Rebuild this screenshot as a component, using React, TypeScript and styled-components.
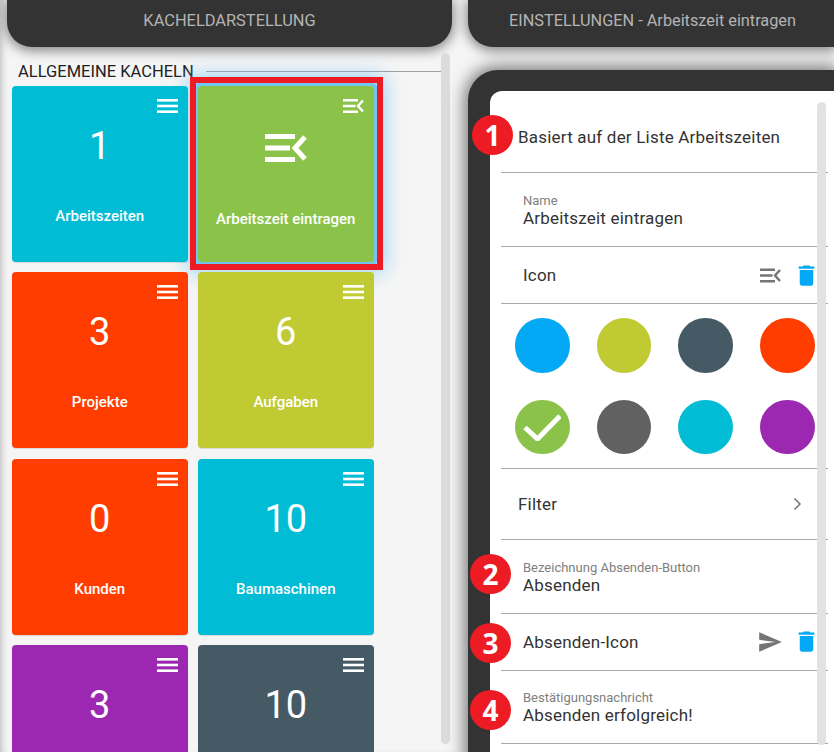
import React from "react";
import styled, { createGlobalStyle } from "styled-components";

const GlobalStyle = createGlobalStyle`
  html, body {
    margin: 0;
    padding: 0;
    background: #f5f5f5;
    font-family: Roboto, "Liberation Sans", sans-serif;
  }
`;

const Page = styled.div`
  display: flex;
  width: 834px;
  height: 752px;
  overflow: hidden;
  background: #f5f5f5;
`;

const LeftPane = styled.div`
  position: relative;
  display: flex;
  flex-direction: column;
  flex: 0 0 460px;
  height: 752px;
  box-sizing: border-box;
  padding: 0 8px 0 0;
  box-shadow: inset 6px 0 6px -4px rgba(0, 0, 0, 0.22);
`;

const RightPane = styled.div`
  position: relative;
  display: flex;
  flex-direction: column;
  flex: 1;
  min-width: 0;
  padding-left: 8px;
  box-sizing: border-box;
`;

const Header = styled.div`
  display: flex;
  align-items: center;
  flex: 0 0 47px;
  box-sizing: border-box;
  padding-bottom: 6px;
  background: #333333;
  box-shadow: 0 2px 12px 2px rgba(0, 0, 0, 0.45);
  color: #b4b4b4;
  white-space: nowrap;
`;

const LeftHeader = styled(Header)`
  justify-content: center;
  margin-left: 7px;
  border-radius: 0 0 25px 25px;
  font-size: 16.4px;
`;

const RightHeader = styled(Header)`
  padding-left: 41px;
  border-radius: 0 0 0 25px;
  font-size: 16.3px;
`;

const SectionRow = styled.div`
  display: flex;
  flex: 0 0 24px;
  align-items: center;
  margin: 12px 9px 3px 18px;
`;

const SectionTitle = styled.div`
  color: #222222;
  font-size: 16.5px;
  white-space: nowrap;
`;

const SectionRule = styled.div`
  flex: 1;
  height: 1px;
  margin-left: 12px;
  background: #9e9e9e;
`;

const TileGrid = styled.div`
  display: grid;
  grid-template-columns: 175.5px 175.5px;
  grid-auto-rows: 176px;
  gap: 10.4px 10.5px;
  padding-left: 12px;
`;

const Tile = styled.div<{ $color: string; $selected?: boolean }>`
  position: relative;
  z-index: ${(p) => (p.$selected ? 0 : 1)};
  display: flex;
  flex-direction: column;
  align-items: center;
  background: ${(p) => p.$color};
  border-radius: 4px;
  color: #ffffff;
  box-shadow: ${(p) =>
    p.$selected
      ? "0 0 0 4px #72c6f0, 0 0 18px 12px rgba(110, 195, 245, 0.6)"
      : "0 1px 1px rgba(0, 0, 0, 0.12)"};
`;

const TileMenu = styled.svg`
  position: absolute;
  top: 13px;
  right: 9.5px;
  width: 21px;
  height: 14px;
`;

const TileNumber = styled.div`
  margin-top: 38px;
  height: 45px;
  font-size: 38px;
  line-height: 45px;
`;

const TileIcon = styled.svg`
  margin-top: 48px;
  width: 42px;
  height: 28px;
`;

const TileLabel = styled.div<{ $selected?: boolean }>`
  margin-top: ${(p) => (p.$selected ? 48 : 38)}px;
  font-size: 15px;
  font-weight: 500;
  line-height: 18px;
  white-space: nowrap;
`;

const Highlight = styled.div`
  position: absolute;
  z-index: 2;
  left: 190px;
  top: 77px;
  width: 193px;
  height: 193px;
  box-sizing: border-box;
  border: 6px solid #ed1c24;
`;

const ScrollTrack = styled.div<{ $color: string }>`
  position: absolute;
  width: 9px;
  border-radius: 5px;
  background: ${(p) => p.$color};
`;

const LeftScroll = styled(ScrollTrack)`
  left: 441px;
  top: 53px;
  height: 691px;
`;

const InnerScroll = styled(ScrollTrack)`
  right: 8px;
  top: 11px;
  bottom: 7px;
`;

const Phone = styled.div`
  position: relative;
  flex: 0 0 auto;
  margin-top: 23px;
  height: 720px;
  padding: 21px 0 0 22px;
  box-sizing: border-box;
  background: #333333;
  border-radius: 30px 0 0 0;
  box-shadow: 0 0 16px 4px rgba(0, 0, 0, 0.5);
`;

const Screen = styled.div`
  position: relative;
  height: 661px;
  padding-left: 11px;
  padding-right: 6px;
  box-sizing: border-box;
  background: #ffffff;
  border-radius: 12px 0 0 0;
`;

const Row = styled.div<{ $height: number; $inset: number }>`
  display: flex;
  align-items: center;
  height: ${(p) => p.$height}px;
  padding-left: ${(p) => p.$inset}px;
  border-bottom: 1px solid #a8a8a8;
  color: #333333;
  font-size: 17px;
  letter-spacing: 0.2px;
  white-space: nowrap;
`;

const SourceRow = styled(Row)`
  box-sizing: border-box;
  padding-top: 10px;
  height: 82px;
`;

const FieldRow = styled(Row)`
  flex-direction: column;
  align-items: flex-start;
  justify-content: center;
  box-sizing: border-box;
  padding-top: 5px;
`;

const FieldLabel = styled.div`
  color: #808080;
  font-size: 13px;
  line-height: 12px;
  letter-spacing: 0;
`;

const FieldValue = styled.div`
  margin-top: 1px;
  color: #333333;
  font-size: 17px;
  line-height: 21px;
`;

const RowEnd = styled.div`
  display: flex;
  align-items: center;
  margin-left: auto;
`;

const ChevronSlot = styled(RowEnd)`
  padding-right: 26px;
`;

const IconActions = styled(RowEnd)`
  gap: 16.5px;
  padding-right: 13.5px;
`;

const SendGlyph = styled.svg`
  margin: 0 -2px;
`;

const TrashGlyph = styled.svg`
  margin: 0 -5px;
`;

const ColorGrid = styled.div`
  display: grid;
  grid-template-columns: repeat(4, 54.5px);
  grid-auto-rows: 54.5px;
  gap: 27.2px;
  padding: 14px 0 13.8px 14px;
  border-bottom: 1px solid #a8a8a8;
`;

const Swatch = styled.div<{ $color: string }>`
  display: flex;
  align-items: center;
  justify-content: center;
  border-radius: 50%;
  background: ${(p) => p.$color};
`;

const Badge = styled.div<{ $top: number; $left: number }>`
  position: absolute;
  left: ${(p) => p.$left}px;
  top: ${(p) => p.$top}px;
  display: flex;
  align-items: center;
  justify-content: center;
  width: 41px;
  height: 40px;
  border-radius: 50%;
  background: #ed1c24;
  color: #ffffff;
  font-family: "Open Sans", sans-serif;
  font-size: 28px;
  font-weight: 700;
  line-height: 40px;
`;

const MenuIcon = () => (
  <TileMenu viewBox="0 0 21 14">
    <rect width="21" height="2.6" fill="#fff" />
    <rect y="5.7" width="21" height="2.6" fill="#fff" />
    <rect y="11.4" width="21" height="2.6" fill="#fff" />
  </TileMenu>
);

// list icon with the chevron, used on the tile and in the settings row
const FormGlyph = ({ color }: { color: string }) => (
  <>
    <rect width="30" height="5" fill={color} />
    <rect y="11.5" width="25" height="5" fill={color} />
    <rect y="23" width="30" height="5" fill={color} />
    <polyline points="40,3 30,14 40,25" fill="none" stroke={color} strokeWidth="5" />
  </>
);

const tiles = [
  { color: "#00bcd4", value: "1", label: "Arbeitszeiten" },
  { color: "#8bc34a", label: "Arbeitszeit eintragen", selected: true },
  { color: "#ff3d00", value: "3", label: "Projekte" },
  { color: "#c0ca33", value: "6", label: "Aufgaben" },
  { color: "#ff3d00", value: "0", label: "Kunden" },
  { color: "#00bcd4", value: "10", label: "Baumaschinen" },
  { color: "#9c27b0", value: "3", label: "" },
  { color: "#455a64", value: "10", label: "" },
];

const swatches = ["#03a9f4", "#c0ca33", "#455a64", "#ff3d00", "#8bc34a", "#616161", "#00bcd4", "#9c27b0"];

const TrashIcon = () => (
  <TrashGlyph width="27" height="27" viewBox="0 0 24 24">
    <path fill="#03a9f4" d="M6 19c0 1.1.9 2 2 2h8c1.1 0 2-.9 2-2V7H6v12zM19 4h-3.5l-1-1h-5l-1 1H5v2h14V4z" />
  </TrashGlyph>
);

const App = () => (
  <Page>
    <GlobalStyle />
    <LeftPane>
      <LeftHeader>KACHELDARSTELLUNG</LeftHeader>
      <SectionRow>
        <SectionTitle>ALLGEMEINE KACHELN</SectionTitle>
        <SectionRule />
      </SectionRow>
      <TileGrid>
        {tiles.map((t, i) => (
          <Tile key={i} $color={t.color} $selected={t.selected}>
            {t.selected ? (
              <TileMenu viewBox="0 0 42 28">
                <FormGlyph color="#fff" />
              </TileMenu>
            ) : (
              <MenuIcon />
            )}
            {t.selected ? (
              <TileIcon viewBox="0 0 42 28">
                <FormGlyph color="#fff" />
              </TileIcon>
            ) : (
              <TileNumber>{t.value}</TileNumber>
            )}
            <TileLabel $selected={t.selected}>{t.label}</TileLabel>
          </Tile>
        ))}
      </TileGrid>
      <Highlight />
      <LeftScroll $color="#dcdcdc" />
    </LeftPane>
    <RightPane>
      <RightHeader>EINSTELLUNGEN - Arbeitszeit eintragen</RightHeader>
      <Phone>
        <Screen>
          <SourceRow $height={82} $inset={17}>Basiert auf der Liste Arbeitszeiten</SourceRow>
          <FieldRow $height={74} $inset={22}>
            <FieldLabel>Name</FieldLabel>
            <FieldValue>Arbeitszeit eintragen</FieldValue>
          </FieldRow>
          <Row $height={56} $inset={22}>
            Icon
            <IconActions>
              <svg width="21" height="15" viewBox="0 0 42 28">
                <FormGlyph color="#757575" />
              </svg>
              <TrashIcon />
            </IconActions>
          </Row>
          <ColorGrid>
            {swatches.map((c, i) => (
              <Swatch key={c + i} $color={c}>
                {i === 4 && (
                  <svg width="38" height="28" viewBox="0 0 38 28">
                    <polyline points="2,14.5 14.5,26 37,3" fill="none" stroke="#fff" strokeWidth="5" />
                  </svg>
                )}
              </Swatch>
            ))}
          </ColorGrid>
          <Row $height={70} $inset={17}>
            Filter
            <ChevronSlot>
              <svg width="9" height="14" viewBox="0 0 9 14">
                <polyline points="1.5,1.5 7,7 1.5,12.5" fill="none" stroke="#757575" strokeWidth="1.5" />
              </svg>
            </ChevronSlot>
          </Row>
          <FieldRow $height={74} $inset={22}>
            <FieldLabel>Bezeichnung Absenden-Button</FieldLabel>
            <FieldValue>Absenden</FieldValue>
          </FieldRow>
          <Row $height={56} $inset={22}>
            Absenden-Icon
            <IconActions>
              <SendGlyph width="26" height="26" viewBox="0 0 24 24">
                <path fill="#757575" d="M2.01 21L23 12 2.01 3 2 10l15 2-15 2z" />
              </SendGlyph>
              <TrashIcon />
            </IconActions>
          </Row>
          <FieldRow $height={73} $inset={22}>
            <FieldLabel>Bestätigungsnachricht</FieldLabel>
            <FieldValue>Absenden erfolgreich!</FieldValue>
          </FieldRow>
          <InnerScroll $color="#e2e2e2" />
        </Screen>
      </Phone>
      <Badge $left={12} $top={115}>1</Badge>
      <Badge $left={10} $top={554}>2</Badge>
      <Badge $left={10} $top={623}>3</Badge>
      <Badge $left={10} $top={690}>4</Badge>
    </RightPane>
  </Page>
);

export default App;
